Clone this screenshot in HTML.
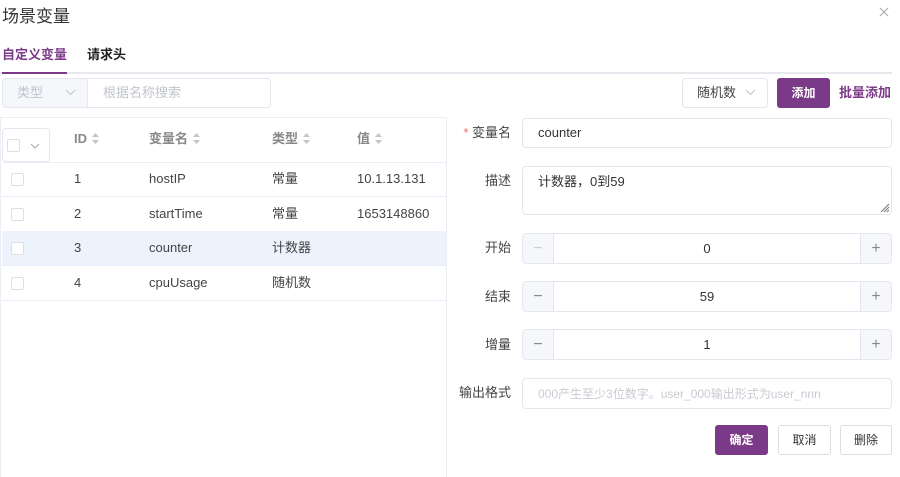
<!DOCTYPE html>
<html><head><meta charset="utf-8"><style>
*{margin:0;padding:0;box-sizing:border-box}
body{width:900px;height:467px;background:#fff;font-family:"Liberation Sans","Noto Sans CJK SC",sans-serif;color:#333;font-size:13px;line-height:16px;position:relative;overflow:hidden}
.a{position:absolute}
.box{position:absolute;border:1px solid #e4e7ed;border-radius:4px;background:#fff}
.lbl{position:absolute;width:90px;text-align:right;left:421px;font-size:13px;color:#444;line-height:16px}
.btn{position:absolute;border-radius:3px;font-size:12px;text-align:center;line-height:28px;border:1px solid #ddd;background:#fff;color:#333}
.pri{background:#7b3a87;border-color:#7b3a87;color:#fff;font-weight:bold}
.step{position:absolute;left:522px;width:370px;height:31px;border:1px solid #e4e7ed;border-radius:4px;background:#fff;overflow:hidden}
.step .m,.step .p{position:absolute;top:0;width:31px;height:29px;background:#f5f7fa;color:#888;text-align:center;line-height:29px;font-size:16px}
.step .m{left:0;border-right:1px solid #e4e7ed}.step .p{right:0;border-left:1px solid #e4e7ed}
.step .v{position:absolute;left:31px;right:31px;top:0;line-height:29px;text-align:center;font-size:13px;color:#333}
.row{position:absolute;left:2px;width:444px;height:35px;border-bottom:1px solid #ebeef5;font-size:13px;color:#444}
.row span{position:absolute;top:0;line-height:34px}
.cb{position:absolute;left:9px;top:11px;width:13px;height:13px;border:1px solid #dcdfe6;border-radius:2px;background:#fff}
.th{position:absolute;top:131px;font-size:13px;font-weight:bold;color:#888;line-height:16px}
.sort{display:inline-block;margin-left:5px;vertical-align:-1px}
</style></head><body>
<div class="a" style="left:2px;top:7px;font-size:17px;line-height:20px;color:#333">场景变量</div>
<svg class="a" style="left:879px;top:7px" width="10" height="10"><path d="M1 1L9 9M9 1L1 9" stroke="#aaa" stroke-width="1.1"/></svg>
<div class="a" style="left:2px;top:47px;font-size:13px;color:#7b3a87;font-weight:bold">自定义变量</div>
<div class="a" style="left:87px;top:47px;font-size:13px;color:#222;font-weight:bold">请求头</div>
<div class="a" style="left:0;top:72px;width:892px;height:2px;background:#e8e8ee"></div>
<div class="a" style="left:2px;top:72px;width:65px;height:2px;background:#7b3a87"></div>

<div class="box" style="left:2px;top:78px;width:269px;height:30px;overflow:hidden">
 <div class="a" style="left:0;top:0;width:85px;height:28px;background:#f5f7fa;border-right:1px solid #e4e7ed"></div>
 <div class="a" style="left:14px;top:6px;color:#c0c4cc">类型</div>
 <svg class="a" style="left:62px;top:10px" width="11" height="7"><path d="M1 1L5.5 5.5L10 1" stroke="#c0c4cc" fill="none"/></svg>
 <div class="a" style="left:100px;top:6px;color:#c0c4cc">根据名称搜索</div>
</div>
<div class="box" style="left:682px;top:78px;width:86px;height:30px"><div class="a" style="left:14px;top:6px;color:#444">随机数</div><svg class="a" style="left:62px;top:10px" width="11" height="7"><path d="M1 1L5.5 5.5L10 1" stroke="#c0c4cc" fill="none"/></svg></div>
<div class="btn pri" style="left:777px;top:78px;width:53px;height:30px">添加</div>
<div class="a" style="left:839px;top:85px;color:#7b3a87;font-size:13px;font-weight:bold">批量添加</div>

<div class="a" style="left:0;top:117px;width:447px;height:360px;border:1px solid #ebeef5;border-bottom:none"></div>
<div class="a" style="left:2px;top:128px;width:48px;height:34px;border:1px solid #e4e7ed;border-radius:4px"></div>
<div class="cb" style="left:7px;top:139px"></div>
<svg class="a" style="left:30px;top:143px" width="10" height="6"><path d="M1 1L5 5L9 1" stroke="#aaa" fill="none"/></svg>
<svg width="0" height="0" style="position:absolute"><defs><g id="s"><path d="M0 4L3.5 0L7 4Z M0 7L3.5 11L7 7Z" fill="#c0c4cc"/></g></defs></svg>
<div class="th" style="left:74px">ID<svg class="sort" width="7" height="11"><use href="#s"/></svg></div>
<div class="th" style="left:149px">变量名<svg class="sort" width="7" height="11"><use href="#s"/></svg></div>
<div class="th" style="left:272px">类型<svg class="sort" width="7" height="11"><use href="#s"/></svg></div>
<div class="th" style="left:357px">值<svg class="sort" width="7" height="11"><use href="#s"/></svg></div>
<div class="a" style="left:2px;top:162px;width:444px;height:1px;background:#ebeef5"></div>
<div class="row" style="top:162px"><div class="cb"></div><span style="left:72px">1</span><span style="left:147px">hostIP</span><span style="left:270px">常量</span><span style="left:355px">10.1.13.131</span></div>
<div class="row" style="top:197px"><div class="cb"></div><span style="left:72px">2</span><span style="left:147px">startTime</span><span style="left:270px">常量</span><span style="left:355px">1653148860</span></div>
<div class="row" style="top:231px;background:#ecf3fd"><div class="cb"></div><span style="left:72px">3</span><span style="left:147px">counter</span><span style="left:270px">计数器</span></div>
<div class="row" style="top:266px"><div class="cb"></div><span style="left:72px">4</span><span style="left:147px">cpuUsage</span><span style="left:270px">随机数</span></div>

<div class="lbl" style="top:125px"><span style="color:#f56c6c">*</span> 变量名</div>
<div class="box" style="left:522px;top:118px;width:370px;height:30px"><div class="a" style="left:15px;top:6px;color:#333">counter</div></div>
<div class="lbl" style="top:173px">描述</div>
<div class="box" style="left:522px;top:166px;width:370px;height:49px"><div class="a" style="left:15px;top:7px;color:#333">计数器，0到59</div><svg class="a" style="right:1px;bottom:1px" width="12" height="12"><path d="M11 3L3 11M11 6L6 11M11 9L9 11" stroke="#777"/></svg></div>
<div class="lbl" style="top:240px">开始</div>
<div class="step" style="top:233px"><div class="m" style="color:#ccc">−</div><div class="v">0</div><div class="p">+</div></div>
<div class="lbl" style="top:289px">结束</div>
<div class="step" style="top:281px"><div class="m">−</div><div class="v">59</div><div class="p">+</div></div>
<div class="lbl" style="top:337px">增量</div>
<div class="step" style="top:329px"><div class="m">−</div><div class="v">1</div><div class="p">+</div></div>
<div class="lbl" style="top:385px">输出格式</div>
<div class="box" style="left:522px;top:378px;width:370px;height:31px"><div class="a" style="left:15px;top:7px;color:#c8cbd2;font-size:12px">000产生至少3位数字。user_000输出形式为user_nnn</div></div>
<div class="btn pri" style="left:715px;top:425px;width:53px;height:30px">确定</div>
<div class="btn" style="left:778px;top:425px;width:53px;height:30px">取消</div>
<div class="btn" style="left:840px;top:425px;width:52px;height:30px">删除</div>
</body></html>
